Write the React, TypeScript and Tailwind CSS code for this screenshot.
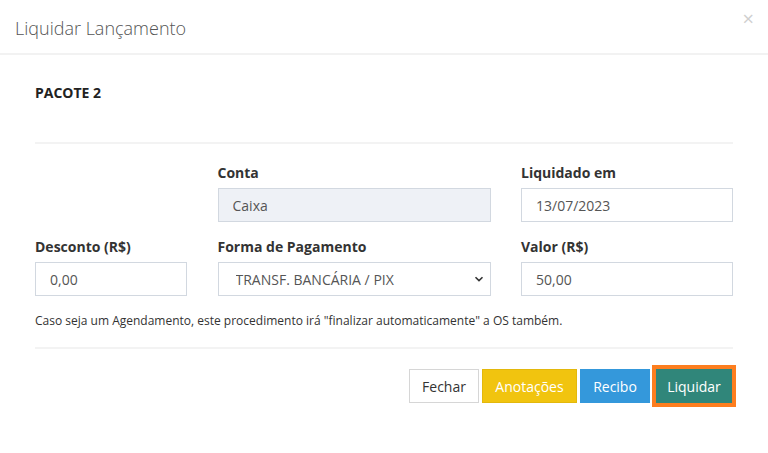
import { useState } from 'react';

const labelCls = 'block text-[14px] font-bold leading-[20px] text-[#333] mb-[5px]';
const inputCls =
  'block w-full h-[34px] border border-[#d2d8e0] px-[14px] text-[14px] text-[#555] outline-none';

export default function App() {
  const [desconto, setDesconto] = useState('0,00');
  const [valor, setValor] = useState('50,00');
  const [data, setData] = useState('13/07/2023');
  const [forma, setForma] = useState('pix');

  return (
    <div className="w-[768px] h-[453px] bg-white font-['Open_Sans',sans-serif] overflow-hidden">
      {/* Header */}
      <div className="h-[55px] border-b-2 border-[#f2f2f2] pl-[15px] pr-[14px] flex items-start justify-between">
        <h4 className="mt-[15px] text-[18px] font-light leading-[26px] text-[#555]">Liquidar Lançamento</h4>
        <button className="mt-[6px] h-[26px] text-[20px] leading-[26px] text-[#cfcfcf]">×</button>
      </div>

      {/* Body */}
      <div className="px-[35px]">
        <div className="pt-[28px] text-[14px] font-bold leading-[20px] text-[#222]">PACOTE 2</div>
        <div className="mt-[39px] h-[2px] bg-[#f3f3f3]" />

        <div className="mt-[19px] grid grid-cols-[152px_273px_212px] justify-between gap-y-[15px]">
          <div />
          <div>
            <label className={labelCls}>Conta</label>
            <input className={`${inputCls} bg-[#eef1f6]`} value="Caixa" readOnly />
          </div>
          <div>
            <label className={labelCls}>Liquidado em</label>
            <input className={`${inputCls} bg-white`} value={data} onChange={(e) => setData(e.target.value)} />
          </div>

          <div>
            <label className={labelCls}>Desconto (R$)</label>
            <input className={`${inputCls} bg-white`} value={desconto} onChange={(e) => setDesconto(e.target.value)} />
          </div>
          <div>
            <label className={labelCls}>Forma de Pagamento</label>
            <div className="relative">
              <select
                className={`${inputCls} bg-white appearance-none pl-[17px]`}
                value={forma}
                onChange={(e) => setForma(e.target.value)}
              >
                <option value="pix">TRANSF. BANCÁRIA / PIX</option>
                <option value="dinheiro">DINHEIRO</option>
                <option value="cartao">CARTÃO</option>
              </select>
              <svg
                className="absolute right-[7px] top-[13px] pointer-events-none"
                width="10"
                height="8"
                viewBox="0 0 10 8"
                fill="none"
              >
                <path d="M1.5 2.2 L5 5.6 L8.5 2.2" stroke="#333" strokeWidth="1.6" />
              </svg>
            </div>
          </div>
          <div>
            <label className={labelCls}>Valor (R$)</label>
            <input className={`${inputCls} bg-white`} value={valor} onChange={(e) => setValor(e.target.value)} />
          </div>
        </div>

        <p className="mt-[16px] text-[12px] leading-[17px] text-[#333]">
          Caso seja um Agendamento, este procedimento irá "finalizar automaticamente" a OS também.
        </p>

        <div className="mt-[18px] h-[2px] bg-[#f3f3f3]" />

        {/* Footer buttons */}
        <div className="mt-[20px] flex justify-end items-center gap-[3px] pr-[1px]">
          <button className="w-[70px] h-[34px] border border-[#d6d6d6] bg-white text-[14px] text-[#333]">
            Fechar
          </button>
          <button className="w-[95px] h-[34px] border border-[#e3b80c] bg-[#f1c40f] text-[14px] text-white">
            Anotações
          </button>
          <button className="w-[70px] h-[34px] border border-[#3498db] bg-[#3498db] text-[14px] text-white">
            Recibo
          </button>
          <button className="ml-[3px] w-[76px] h-[34px] bg-[#30867a] text-[14px] text-white shadow-[0_0_0_4px_#fd7e1f]">
            Liquidar
          </button>
        </div>
      </div>
    </div>
  );
}
